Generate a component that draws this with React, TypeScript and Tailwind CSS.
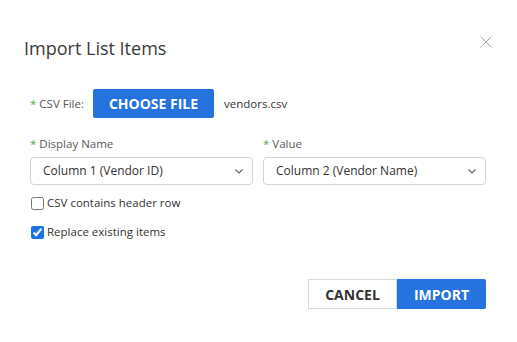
import React from 'react'

const FONT = { fontFamily: '"Open Sans", "Noto Sans", Arial, sans-serif' }

function Req({ children }: { children: React.ReactNode }) {
  return (
    <span className="text-[11.5px] leading-[16px] text-[#595959]">
      <span className="text-[#52a83a] mr-[3px]">*</span>
      {children}
    </span>
  )
}

function Select({ value }: { value: string }) {
  return (
    <div className="flex items-center justify-between w-[223px] h-[28px] border border-[#d4d4d4] rounded-[4px] pl-[12px] pr-[9px] bg-white">
      <span className="text-[12px] text-[#333]">{value}</span>
      <svg width="8" height="5" viewBox="0 0 8 5" fill="none">
        <path d="M0.5 0.5l3.5 3.5 3.5-3.5" stroke="#666" strokeWidth="1.1" />
      </svg>
    </div>
  )
}

export default function App() {
  return (
    <div className="w-[517px] h-[342px] bg-white" style={FONT}>
      <div className="flex items-center justify-between pt-[34px] pl-[24px] pr-[25px]">
        <h1 className="text-[18px] leading-[28px] font-normal text-[#3a3a3a]">Import List Items</h1>
        <svg width="12" height="12" viewBox="0 0 12 12" fill="none" className="mt-[-12px]">
          <path d="M0.5 0.5l11 11M11.5 0.5l-11 11" stroke="#a6a6a6" strokeWidth="1" />
        </svg>
      </div>

      <div className="pl-[30px] pr-[31px]">
        <div className="flex items-center mt-[27px]">
          <div className="self-start mt-[1px] w-[63px]">
            <Req>CSV File:</Req>
          </div>
          <button className="w-[121px] h-[29px] bg-[#2672de] text-white text-[14px] font-bold rounded-[2px]">
            CHOOSE FILE
          </button>
          <span className="ml-[10px] text-[11.5px] text-[#333]">vendors.csv</span>
        </div>

        <div className="flex gap-[10px] mt-[18px]">
          <div className="flex flex-col gap-[5px]">
            <Req>Display Name</Req>
            <Select value="Column 1 (Vendor ID)" />
          </div>
          <div className="flex flex-col gap-[5px]">
            <Req>Value</Req>
            <Select value="Column 2 (Vendor Name)" />
          </div>
        </div>

        <label className="flex items-center mt-[10px] h-[16px]">
          <input type="checkbox" className="w-[13px] h-[13px] m-0 ml-[1px] accent-[#1a73e8]" />
          <span className="ml-[3px] text-[11.5px] text-[#333]">CSV contains header row</span>
        </label>
        <label className="flex items-center mt-[13px] h-[16px]">
          <input type="checkbox" defaultChecked className="w-[13px] h-[13px] m-0 ml-[1px] accent-[#1a73e8]" />
          <span className="ml-[3px] text-[11.5px] text-[#333]">Replace existing items</span>
        </label>

        <div className="flex justify-end mt-[39px]">
          <button className="w-[89px] h-[30px] border border-[#d9d9d9] bg-white text-[#333] text-[14px] font-bold">
            CANCEL
          </button>
          <button className="w-[89px] h-[30px] bg-[#2672de] text-white text-[14px] font-bold rounded-r-[2px]">
            IMPORT
          </button>
        </div>
      </div>
    </div>
  )
}
